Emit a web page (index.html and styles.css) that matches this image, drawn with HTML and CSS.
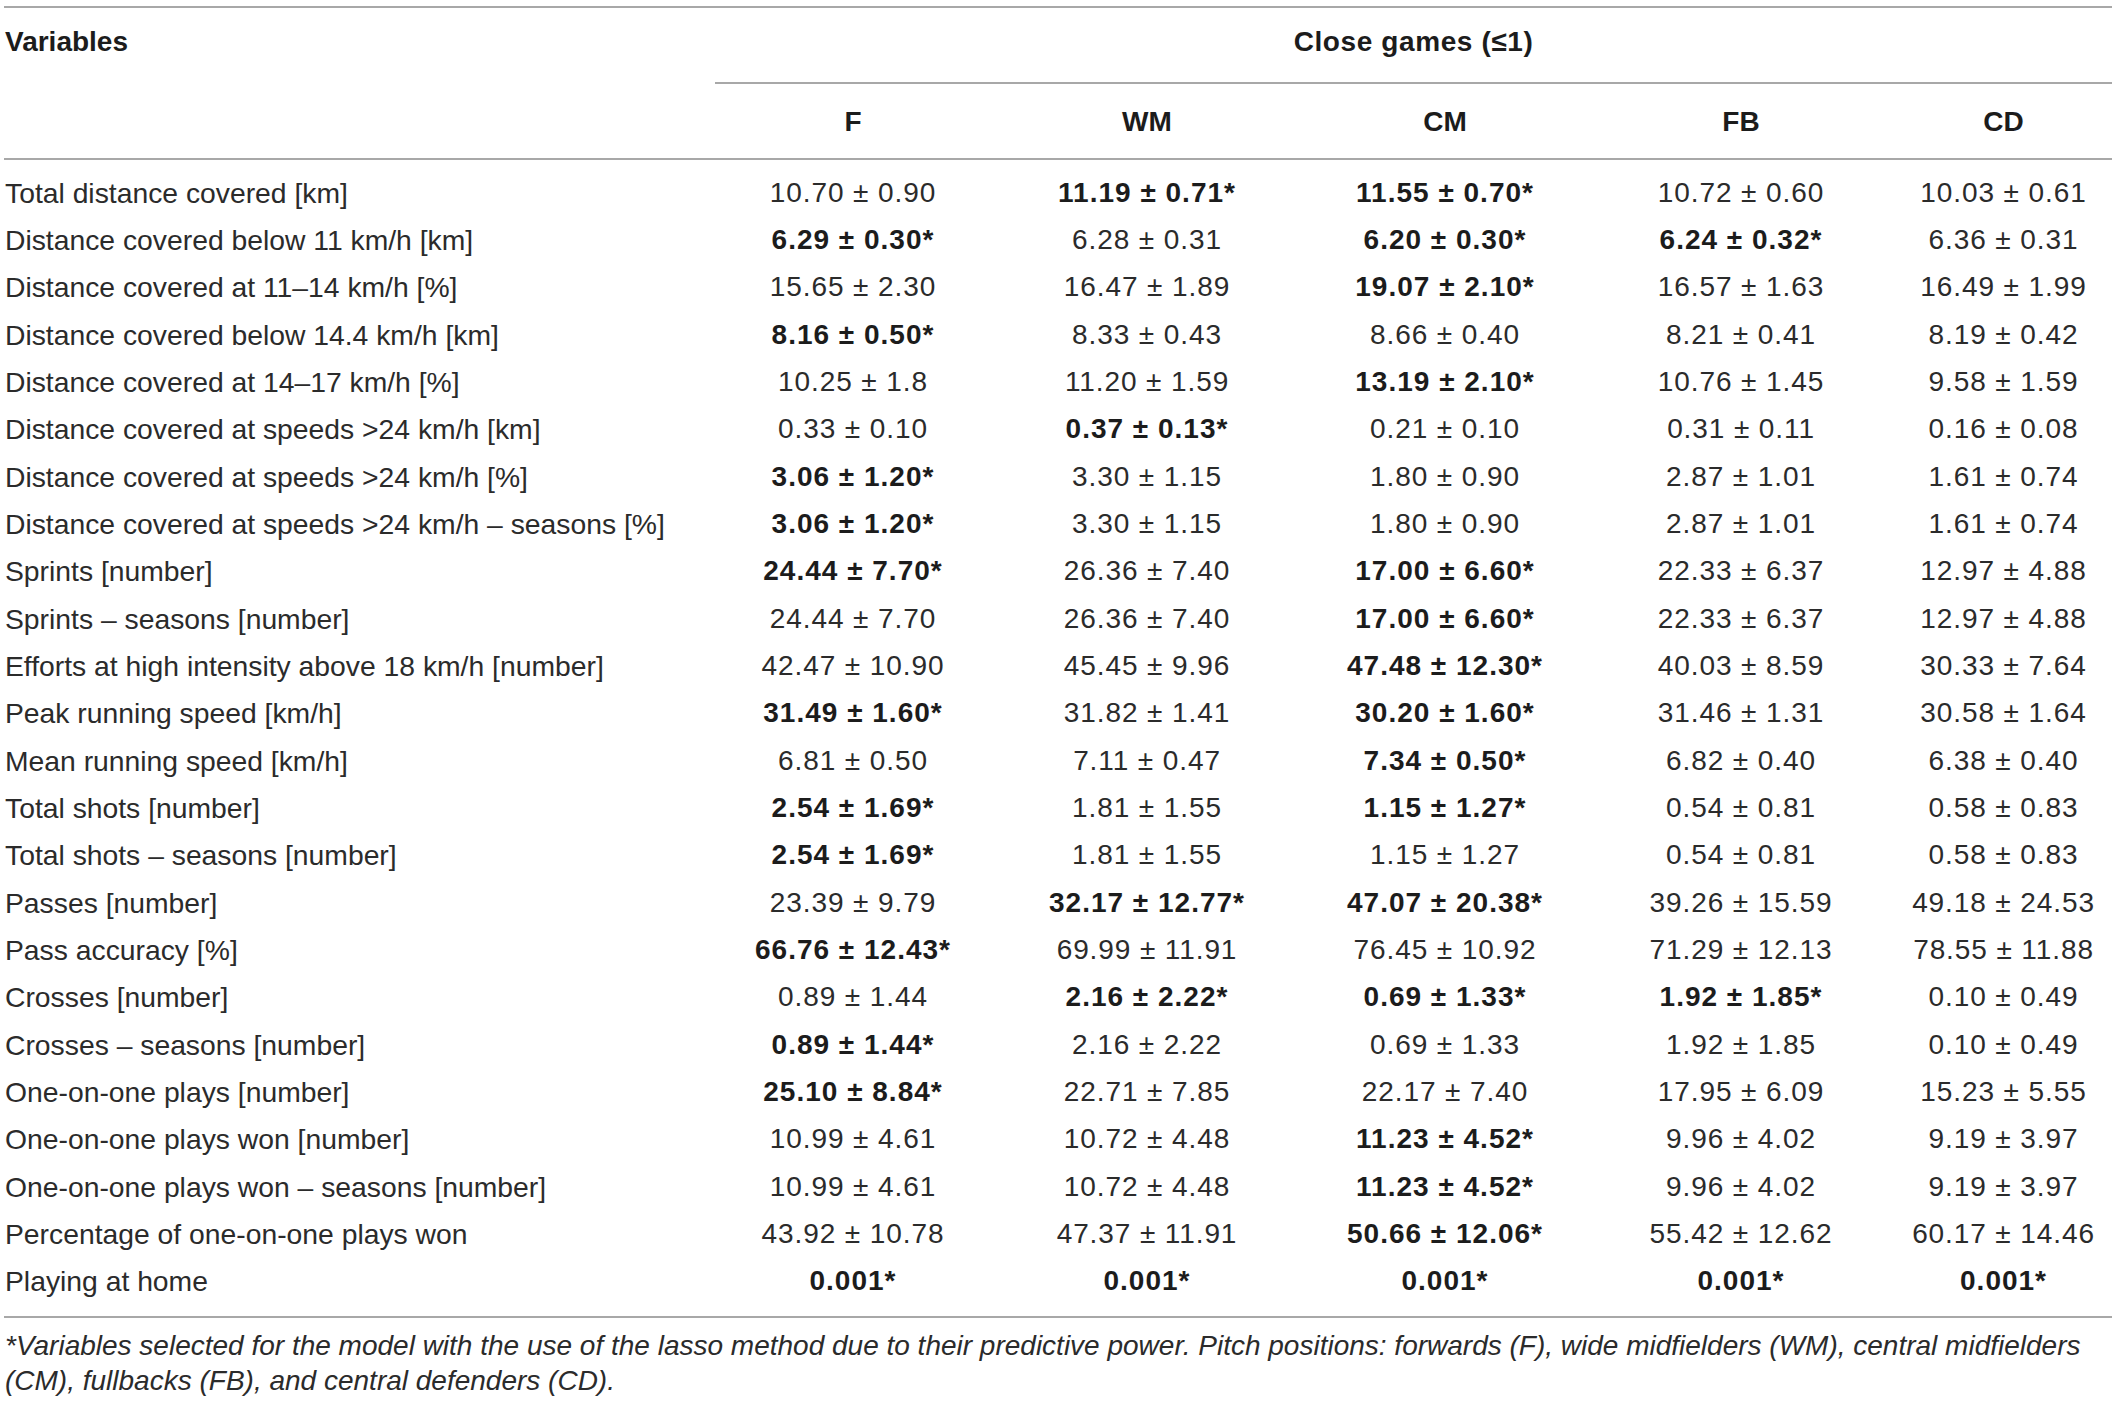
FILE: index.html
```html
<!DOCTYPE html>
<html lang="en">
<head>
<meta charset="utf-8">
<title>Close games table</title>
<link rel="stylesheet" href="styles.css">
</head>
<body>
<div class="wrap">
<table class="data">
  <colgroup>
    <col class="c-label"><col class="c-f"><col class="c-wm"><col class="c-cm"><col class="c-fb"><col class="c-cd">
  </colgroup>
  <thead>
    <tr class="h1">
      <th class="var" rowspan="2">Variables</th>
      <th class="group" colspan="5">Close games (≤1)</th>
    </tr>
    <tr class="h2">
      <th>F</th><th>WM</th><th>CM</th><th>FB</th><th>CD</th>
    </tr>
  </thead>
  <tbody>
    <tr class="first"><td>Total distance covered [km]</td><td>10.70 ± 0.90</td><td class="b">11.19 ± 0.71*</td><td class="b">11.55 ± 0.70*</td><td>10.72 ± 0.60</td><td>10.03 ± 0.61</td></tr>
    <tr><td>Distance covered below 11 km/h [km]</td><td class="b">6.29 ± 0.30*</td><td>6.28 ± 0.31</td><td class="b">6.20 ± 0.30*</td><td class="b">6.24 ± 0.32*</td><td>6.36 ± 0.31</td></tr>
    <tr><td>Distance covered at 11–14 km/h [%]</td><td>15.65 ± 2.30</td><td>16.47 ± 1.89</td><td class="b">19.07 ± 2.10*</td><td>16.57 ± 1.63</td><td>16.49 ± 1.99</td></tr>
    <tr><td>Distance covered below 14.4 km/h [km]</td><td class="b">8.16 ± 0.50*</td><td>8.33 ± 0.43</td><td>8.66 ± 0.40</td><td>8.21 ± 0.41</td><td>8.19 ± 0.42</td></tr>
    <tr><td>Distance covered at 14–17 km/h [%]</td><td>10.25 ± 1.8</td><td>11.20 ± 1.59</td><td class="b">13.19 ± 2.10*</td><td>10.76 ± 1.45</td><td>9.58 ± 1.59</td></tr>
    <tr><td>Distance covered at speeds &gt;24 km/h [km]</td><td>0.33 ± 0.10</td><td class="b">0.37 ± 0.13*</td><td>0.21 ± 0.10</td><td>0.31 ± 0.11</td><td>0.16 ± 0.08</td></tr>
    <tr><td>Distance covered at speeds &gt;24 km/h [%]</td><td class="b">3.06 ± 1.20*</td><td>3.30 ± 1.15</td><td>1.80 ± 0.90</td><td>2.87 ± 1.01</td><td>1.61 ± 0.74</td></tr>
    <tr><td>Distance covered at speeds &gt;24 km/h – seasons [%]</td><td class="b">3.06 ± 1.20*</td><td>3.30 ± 1.15</td><td>1.80 ± 0.90</td><td>2.87 ± 1.01</td><td>1.61 ± 0.74</td></tr>
    <tr><td>Sprints [number]</td><td class="b">24.44 ± 7.70*</td><td>26.36 ± 7.40</td><td class="b">17.00 ± 6.60*</td><td>22.33 ± 6.37</td><td>12.97 ± 4.88</td></tr>
    <tr><td>Sprints – seasons [number]</td><td>24.44 ± 7.70</td><td>26.36 ± 7.40</td><td class="b">17.00 ± 6.60*</td><td>22.33 ± 6.37</td><td>12.97 ± 4.88</td></tr>
    <tr><td>Efforts at high intensity above 18 km/h [number]</td><td>42.47 ± 10.90</td><td>45.45 ± 9.96</td><td class="b">47.48 ± 12.30*</td><td>40.03 ± 8.59</td><td>30.33 ± 7.64</td></tr>
    <tr><td>Peak running speed [km/h]</td><td class="b">31.49 ± 1.60*</td><td>31.82 ± 1.41</td><td class="b">30.20 ± 1.60*</td><td>31.46 ± 1.31</td><td>30.58 ± 1.64</td></tr>
    <tr><td>Mean running speed [km/h]</td><td>6.81 ± 0.50</td><td>7.11 ± 0.47</td><td class="b">7.34 ± 0.50*</td><td>6.82 ± 0.40</td><td>6.38 ± 0.40</td></tr>
    <tr><td>Total shots [number]</td><td class="b">2.54 ± 1.69*</td><td>1.81 ± 1.55</td><td class="b">1.15 ± 1.27*</td><td>0.54 ± 0.81</td><td>0.58 ± 0.83</td></tr>
    <tr><td>Total shots – seasons [number]</td><td class="b">2.54 ± 1.69*</td><td>1.81 ± 1.55</td><td>1.15 ± 1.27</td><td>0.54 ± 0.81</td><td>0.58 ± 0.83</td></tr>
    <tr><td>Passes [number]</td><td>23.39 ± 9.79</td><td class="b">32.17 ± 12.77*</td><td class="b">47.07 ± 20.38*</td><td>39.26 ± 15.59</td><td>49.18 ± 24.53</td></tr>
    <tr><td>Pass accuracy [%]</td><td class="b">66.76 ± 12.43*</td><td>69.99 ± 11.91</td><td>76.45 ± 10.92</td><td>71.29 ± 12.13</td><td>78.55 ± 11.88</td></tr>
    <tr><td>Crosses [number]</td><td>0.89 ± 1.44</td><td class="b">2.16 ± 2.22*</td><td class="b">0.69 ± 1.33*</td><td class="b">1.92 ± 1.85*</td><td>0.10 ± 0.49</td></tr>
    <tr><td>Crosses – seasons [number]</td><td class="b">0.89 ± 1.44*</td><td>2.16 ± 2.22</td><td>0.69 ± 1.33</td><td>1.92 ± 1.85</td><td>0.10 ± 0.49</td></tr>
    <tr><td>One-on-one plays [number]</td><td class="b">25.10 ± 8.84*</td><td>22.71 ± 7.85</td><td>22.17 ± 7.40</td><td>17.95 ± 6.09</td><td>15.23 ± 5.55</td></tr>
    <tr><td>One-on-one plays won [number]</td><td>10.99 ± 4.61</td><td>10.72 ± 4.48</td><td class="b">11.23 ± 4.52*</td><td>9.96 ± 4.02</td><td>9.19 ± 3.97</td></tr>
    <tr><td>One-on-one plays won – seasons [number]</td><td>10.99 ± 4.61</td><td>10.72 ± 4.48</td><td class="b">11.23 ± 4.52*</td><td>9.96 ± 4.02</td><td>9.19 ± 3.97</td></tr>
    <tr><td>Percentage of one-on-one plays won</td><td>43.92 ± 10.78</td><td>47.37 ± 11.91</td><td class="b">50.66 ± 12.06*</td><td>55.42 ± 12.62</td><td>60.17 ± 14.46</td></tr>
    <tr class="last"><td>Playing at home</td><td class="b">0.001*</td><td class="b">0.001*</td><td class="b">0.001*</td><td class="b">0.001*</td><td class="b">0.001*</td></tr>
  </tbody>
</table>
<p class="note">*Variables selected for the model with the use of the lasso method due to their predictive power. Pitch positions: forwards (F), wide midfielders (WM), central midfielders (CM), fullbacks (FB), and central defenders (CD).</p>
</div>
</body>
</html>
```

FILE: styles.css
```css
html, body {
  margin: 0;
  padding: 0;
  background: #ffffff;
}

.wrap {
  padding: 6px 6px 0 4px;
  font-family: "Liberation Sans", Arial, sans-serif;
  color: #2b2b2b;
}

.data {
  width: 2108px;
  table-layout: fixed;
  border-collapse: separate;
  border-spacing: 0;
  border-top: 2px solid #a8a8a8;
  border-bottom: 2px solid #a8a8a8;
  font-size: 28px;
}

.c-label { width: 711px; }
.c-f { width: 276px; }
.c-wm { width: 312px; }
.c-cm { width: 284px; }
.c-fb { width: 308px; }
.c-cd { width: 217px; }

.data th {
  font-weight: bold;
  color: #1c1c1c;
  line-height: 34px;
  padding: 0;
}

.h1 th {
  padding-top: 17px;
  padding-bottom: 23px;
}

.h1 .var {
  text-align: left;
  vertical-align: top;
  padding-left: 1px;
  border-bottom: 2px solid #a8a8a8;
}

.h1 .group {
  text-align: center;
  letter-spacing: 0.6px;
  border-bottom: 2px solid #a8a8a8;
}

.h2 th {
  text-align: center;
  padding-top: 21px;
  padding-bottom: 19px;
  border-bottom: 2px solid #a8a8a8;
}

.data td {
  height: 47.33px;
  padding: 0;
  line-height: 32px;
  text-align: center;
  vertical-align: middle;
  white-space: nowrap;
  letter-spacing: 0.9px;
}

.data td:first-child {
  text-align: left;
  padding-left: 1px;
  font-size: 28.3px;
  letter-spacing: 0;
}

.data tr.first td {
  padding-top: 9px;
}

.data tr.last td {
  padding-bottom: 11px;
}

.data td.b {
  font-weight: bold;
  color: #1c1c1c;
  letter-spacing: 1px;
}

.note {
  margin: 10px 0 0 1px;
  font-size: 28px;
  line-height: 35px;
  font-style: italic;
  color: #2b2b2b;
}
```
